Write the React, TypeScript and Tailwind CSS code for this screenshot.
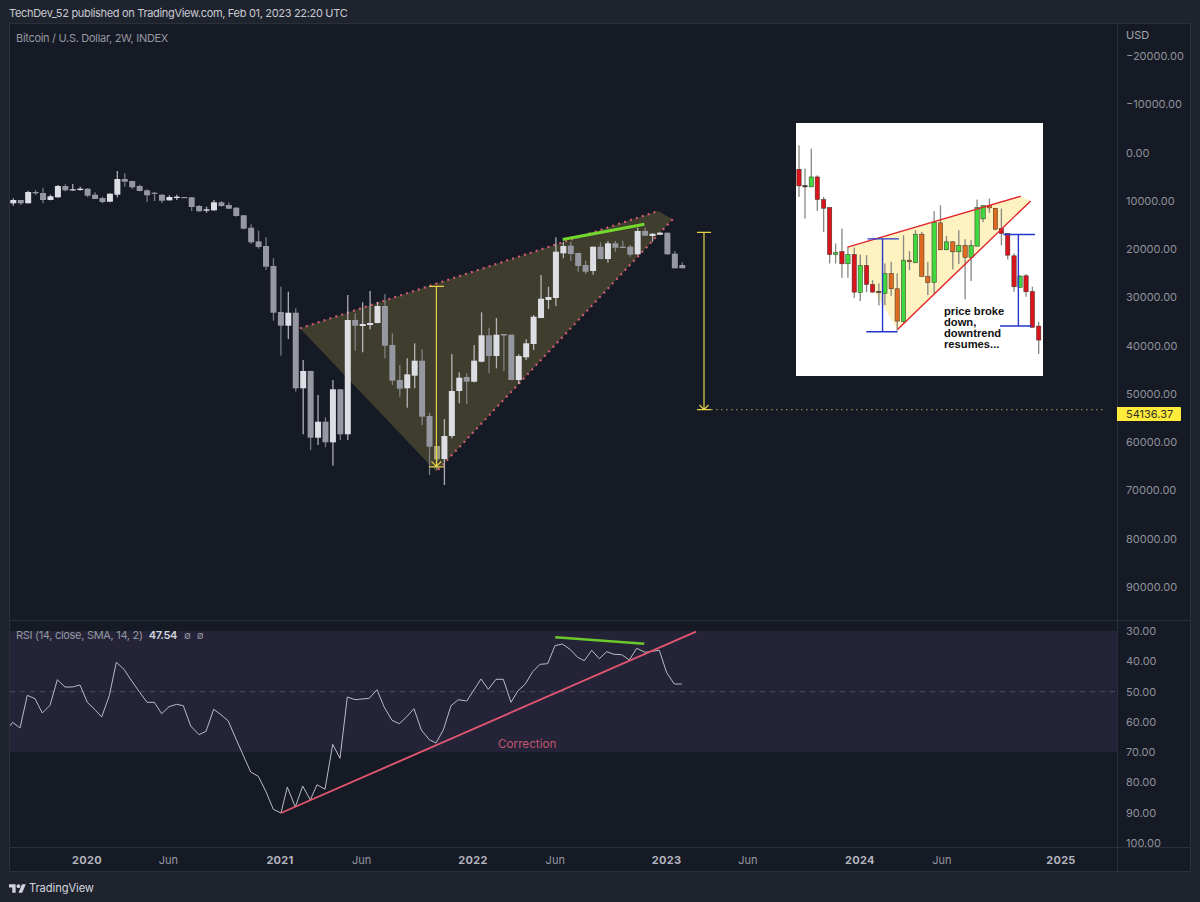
const font = 'font-["Inter","Liberation_Sans",sans-serif]';

// page pixel coords: wickTop, bodyTop, bodyBottom, wickBottom, tone
type Candle = [number, number, number, number, 'l' | 'g' | 'y'];

const candles: Candle[] = [
  [198.3, 200, 203.3, 205.7, 'l'], [200, 200, 203.3, 205, 'g'], [190.7, 192, 203.3, 203.3, 'l'],
  [190, 192, 193.3, 195, 'g'], [187.7, 193, 200, 203.3, 'g'], [194.7, 196.3, 200, 200.3, 'l'],
  [185, 186, 197.3, 197.7, 'l'], [184.3, 186, 190.3, 191.3, 'g'], [184, 189.3, 190.3, 190.7, 'l'],
  [186.7, 188.7, 190, 190.7, 'l'], [188.3, 188.7, 195.7, 197.3, 'g'], [192.3, 194.7, 199, 199, 'g'],
  [196.7, 198, 202, 203.3, 'g'], [193.3, 193.7, 201.7, 202.3, 'l'], [171, 179, 194.7, 197.3, 'l'],
  [173.3, 179, 181.7, 186.7, 'g'], [180.7, 181, 187.3, 189, 'g'], [184.7, 186, 191, 191.3, 'g'],
  [189.3, 190.3, 195.3, 202, 'g'], [192, 192.7, 193.7, 201, 'g'], [194.3, 194.7, 200.7, 203, 'g'],
  [195.3, 197, 200.3, 200.7, 'l'], [194.7, 196.7, 198, 200, 'l'], [197, 197, 198, 198, 'g'],
  [197, 197.3, 207, 211, 'g'], [205, 206, 211.3, 211.7, 'g'], [206.7, 209.3, 210.7, 212.7, 'l'],
  [200, 202.3, 210.3, 211, 'l'], [201, 202.3, 206, 206.7, 'g'], [202.3, 205, 208.7, 209, 'g'],
  [207, 207.7, 216, 216.7, 'g'], [215, 215.3, 228.7, 229.3, 'g'], [224.3, 227.7, 242.3, 244, 'g'],
  [230.7, 241.3, 247, 248.7, 'g'], [237.3, 246, 266.7, 270, 'g'], [258.3, 266, 312.7, 320.7, 'g'],
  [286.7, 312, 325.7, 355.7, 'g'], [291.7, 312.7, 325.7, 339, 'l'], [308.3, 312.7, 388.3, 391.7, 'g'],
  [360, 371, 388.3, 434.3, 'l'], [370.7, 371, 437.7, 450, 'g'], [395, 421.7, 437.7, 445, 'l'],
  [417.3, 421.7, 442.3, 447.3, 'g'], [380, 389.3, 442.3, 465.7, 'l'], [389, 389.3, 434.3, 440, 'g'],
  [295, 320, 434.3, 440, 'l'], [313.3, 320, 325.7, 350.7, 'g'], [302.3, 324, 326, 352.3, 'l'],
  [291, 323, 325, 329.3, 'l'], [302.3, 306, 323, 323.3, 'l'], [294, 306, 345.7, 358.3, 'g'],
  [333.3, 345, 380.7, 385, 'g'], [365, 380, 388.7, 396.7, 'g'], [358.3, 374.3, 388.3, 407.7, 'l'],
  [343.3, 360.7, 375.7, 388.3, 'l'], [349.3, 360.7, 416.7, 425, 'g'], [412.7, 416, 446.7, 475, 'g'],
  [446, 446, 459.3, 470, 'y'], [419, 436, 459, 485, 'l'], [354, 391, 436, 438.3, 'l'],
  [372.3, 377.7, 391, 403.3, 'l'], [373.3, 377, 381.7, 404, 'g'], [345, 360.7, 381.7, 382.3, 'l'],
  [312.3, 335.3, 361.7, 362.3, 'l'], [327.7, 335.3, 356, 373.3, 'g'], [318, 334.7, 356, 368.3, 'l'],
  [334, 334, 335.5, 371, 'g'], [334.7, 334.7, 380, 380, 'g'], [354.3, 356, 380, 384, 'l'],
  [339.3, 343.3, 357.3, 360, 'l'], [315, 316.7, 344, 350, 'l'], [275, 298.7, 318, 318, 'l'],
  [286.7, 297, 300, 309, 'l'], [237.3, 251.7, 298, 306, 'l'], [241.7, 246, 253.3, 258.3, 'l'],
  [241.7, 245.7, 254, 260.7, 'g'], [252.7, 253, 266, 271.7, 'g'], [260.7, 265, 271.7, 274, 'g'],
  [246.7, 246.7, 271, 274.7, 'l'], [242.3, 246.7, 259, 259.3, 'g'], [241, 243.3, 259, 262.7, 'l'],
  [241, 243.3, 247.7, 251.7, 'g'], [240.7, 246.7, 248, 248.3, 'g'], [245, 246.7, 254.7, 256.7, 'g'],
  [227.7, 231, 254.3, 255, 'l'], [227.7, 231, 235.7, 236, 'g'], [233.3, 233.7, 236, 241.7, 'l'],
  [232.3, 232.7, 234.7, 235, 'l'], [232.7, 232.7, 254.3, 254.7, 'g'], [251, 253.7, 268.3, 268.3, 'g'],
  [262.3, 265, 268.3, 268.3, 'g'],
];

const toneColor = { l: '#dcdee4', g: '#9598a1', y: '#9d9b80' };

const rsiPoints =
  '9.3,726.7 12.7,722.3 20,728 27.3,695.3 35,698.7 42.3,713 50,705.3 57.3,679.7 65,687 72.3,687 80,685 87.3,702.3 95,709.7 101.7,717 109.3,695.7 116.3,662.3 124,669.3 131.7,681 139.3,691.7 147,702.3 154.3,702.3 161.7,713.7 169,706.7 176.7,704.3 183.3,705.7 190.7,726 199,734.7 206,731.3 213.7,709.3 221,714.7 228.3,721 236,739 243.7,756.3 250.7,772 258.3,776.3 266,791.7 273.3,809.3 281,813 287.3,787 295.3,807 302.7,786 310.3,800 317,784.7 325,789.3 332.7,744.3 340,758.3 347.3,697 355,699.7 369.3,698.3 377,689.7 384,706.7 392,720.3 399.3,723.7 406.7,716.7 414,708.7 421.3,730 429.3,739.7 436,743 443.3,730 451,705.7 458.3,699.7 466.7,701 481,679 488.3,689.3 496,679.3 503.3,679.3 511,702.3 518,690.7 525.3,684 532.7,671.7 540,664.3 547.7,663.7 555,645.7 562.3,644 570,649.3 577.7,657.3 584.3,660.7 591.7,650.3 599.3,658.7 606.7,651.7 614,654.3 621.7,654.7 629.3,660 636.7,648.3 645,652.3 659.3,650.3 666.7,672.7 674.3,684 681.7,684';

// inset picture, in its own units: x, wickTop, bodyTop, bodyBottom, wickBottom, colour
type InsetCandle = [number, number, number, number, number, string];
const red = '#d8141c';
const orange = '#de6a20';
const green = '#3fd83f';
const dark = '#222222';
const insetCandles: InsetCandle[] = [
  [26, 75, 147, 197, 230, red], [44, 145, 196, 200, 295, dark], [63, 85, 170, 200, 200, green],
  [81, 165, 170, 238, 272, red], [100, 230, 238, 264, 335, red], [118, 262, 262, 403, 430, red],
  [136, 370, 397, 403, 430, green], [155, 325, 394, 431, 473, red], [173, 380, 403, 431, 473, green],
  [192, 382, 403, 516, 533, red], [210, 403, 436, 517, 543, green], [229, 405, 436, 493, 517, red],
  [247, 480, 493, 516, 517, red], [266, 490, 514, 517, 556, dark], [284, 430, 460, 520, 555, green],
  [303, 425, 460, 506, 527, orange], [321, 460, 506, 603, 632, orange], [340, 345, 420, 605, 610, green],
  [358, 393, 420, 425, 450, orange], [376, 330, 342, 428, 428, green], [395, 335, 342, 469, 470, orange],
  [413, 425, 469, 487, 525, orange], [432, 273, 306, 487, 520, green], [451, 255, 308, 389, 390, orange],
  [469, 347, 365, 389, 390, green], [488, 363, 365, 395, 448, orange], [506, 330, 376, 395, 432, green],
  [525, 357, 376, 412, 538, orange], [543, 360, 376, 412, 483, green], [561, 238, 262, 378, 378, green],
  [579, 255, 256, 296, 306, green], [598, 235, 256, 263, 278, orange], [616, 263, 264, 327, 330, orange],
  [634, 265, 325, 340, 376, red], [653, 340, 340, 405, 418, red], [672, 400, 407, 500, 515, red],
  [690, 465, 468, 502, 502, green], [708, 462, 467, 515, 530, red], [727, 500, 514, 622, 622, red],
  [746, 605, 618, 660, 702, red],
];

const priceLabels = [
  '−20000.00', '−10000.00', '0.00', '10000.00', '20000.00', '30000.00',
  '40000.00', '50000.00', '60000.00', '70000.00', '80000.00', '90000.00',
];
const rsiLabels = ['30.00', '40.00', '50.00', '60.00', '70.00', '80.00', '90.00', '100.00'];

const timeLabels: { text: string; center: number; year?: boolean }[] = [
  { text: '2020', center: 87, year: true },
  { text: 'Jun', center: 168.3 },
  { text: '2021', center: 280, year: true },
  { text: 'Jun', center: 361.7 },
  { text: '2022', center: 473, year: true },
  { text: 'Jun', center: 555.3 },
  { text: '2023', center: 666.7, year: true },
  { text: 'Jun', center: 748 },
  { text: '2024', center: 860, year: true },
  { text: 'Jun', center: 942 },
  { text: '2025', center: 1061, year: true },
];

function MainDrawing() {
  return (
    <svg className="absolute inset-0" width="1107" height="596" viewBox="10 24 1107 596">
      <polygon points="300,328.3 658.3,211 672.7,219.3 436.3,471.7" fill="#3f3d2e" />
      <line x1="300" y1="328.3" x2="658.3" y2="211" stroke="#cf5c74" strokeWidth="2.2" strokeDasharray="2 4.2" />
      <line x1="672.7" y1="219.3" x2="436.3" y2="471.7" stroke="#cf5c74" strokeWidth="2.2" strokeDasharray="2 4.2" />
      {candles.map(([wickTop, top, bottom, wickBottom, tone], i) => {
        const x = 13.3 + i * 7.433;
        return (
          <g key={i} fill={toneColor[tone]}>
            <rect x={x - 0.65} y={wickTop} width="1.3" height={wickBottom - wickTop} opacity="0.75" />
            <rect x={x - 3} y={top} width="6" height={Math.max(bottom - top, 1.2)} />
          </g>
        );
      })}
      <g stroke="#e6d24a" strokeWidth="1.2" fill="none">
        <path d="M429 286.3H444M436.4 286.3V466.5M429 466.8H444M431.5 461.5L436.4 466.5L441.3 461.5" />
        <path d="M697 232.3H711M704 232.3V409.7M697 409.7H711M699.5 405L704 409.7L708.5 405" />
      </g>
      <line x1="711" y1="409.7" x2="1106" y2="409.7" stroke="#8a8050" strokeWidth="1.2" strokeDasharray="1.6 3.4" />
      <line x1="562.7" y1="239.5" x2="644.3" y2="224.3" stroke="#72d92c" strokeWidth="2.9" />
    </svg>
  );
}

function InsetPicture() {
  return (
    <div className="absolute left-[786px] top-[99px] h-[253px] w-[247px] bg-white">
      <svg className="absolute inset-0" width="247" height="253" viewBox="18 8 740 760">
        <polygon points="172,381 692,228 722,242 322,628" fill="#fdf2c0" />
        {insetCandles.map(([x, wickTop, top, bottom, wickBottom, color]) => (
          <g key={x}>
            <rect x={x - 2} y={wickTop} width="4" height={wickBottom - wickTop} fill="#8a8a84" />
            <rect x={x - 6.5} y={top} width="13" height={Math.max(bottom - top, 3)} fill={color} stroke="#3a3026" strokeWidth="1.5" />
          </g>
        ))}
        <g stroke="#e0242c" strokeWidth="4.2">
          <line x1="172" y1="381" x2="692" y2="228" />
          <line x1="322" y1="628" x2="722" y2="242" />
        </g>
        <g stroke="#2536cf" strokeWidth="4.2" fill="none">
          <path d="M232 356H326M277 356V635M228 635H322" />
          <path d="M640 343H735M685 343V618M630 618H725" />
        </g>
      </svg>
      <p className='absolute left-[148px] top-[183px] font-["Liberation_Sans",sans-serif] text-[11.2px] font-bold leading-[11.1px] text-[#111111]'>
        price broke
        <br />
        down,
        <br />
        downtrend
        <br />
        resumes...
      </p>
    </div>
  );
}

function RsiDrawing() {
  return (
    <svg className="absolute inset-0" width="1107" height="226" viewBox="10 621 1107 226">
      <line x1="10" y1="691.7" x2="1117" y2="691.7" stroke="#4c4a5e" strokeWidth="1" strokeDasharray="5 5" />
      <polyline points={rsiPoints} fill="none" stroke="#b9bbc5" strokeWidth="1" />
      <line x1="281" y1="813" x2="696" y2="631.7" stroke="#e0566e" strokeWidth="1.9" />
      <line x1="555.3" y1="637.3" x2="644.3" y2="643.7" stroke="#6cc92c" strokeWidth="2.4" />
    </svg>
  );
}

export default function App() {
  return (
    <div className={`flex h-[902px] w-[1200px] flex-col overflow-hidden bg-[#1f232e] ${font}`}>
      <header className="flex h-[23px] shrink-0 items-center pl-[9px] pt-[3px] text-[11px] tracking-[-0.32px] text-[#c8cad2]">
        TechDev_52 published on TradingView.com, Feb 01, 2023 22:20 UTC
      </header>

      <div className="mx-[9px] flex h-[849px] shrink-0 border border-[#2b2f3a] bg-[#161a25]">
        <div className="flex w-[1107px] shrink-0 flex-col">
          <div className="relative h-[597px] shrink-0 overflow-hidden border-b border-[#2b2f3a]">
            <MainDrawing />
            <InsetPicture />
            <div className="absolute left-[6px] top-[7px] text-[11px] leading-[14px] tracking-[-0.3px] text-[#9598a1]">
              Bitcoin / U.S. Dollar, 2W, INDEX
            </div>
          </div>

          <div className="relative h-[227px] shrink-0 overflow-hidden border-b border-[#2b2f3a] pt-[10px]">
            <div className="h-[121px] bg-[#242338]" />
            <RsiDrawing />
            <div className="absolute left-[6px] top-[7px] flex items-center gap-[6px] text-[11px] leading-[14px] tracking-[-0.3px] text-[#9598a1]">
              <span>RSI (14, close, SMA, 14, 2)</span>
              <span className="font-semibold text-[#d1d4dc]">47.54</span>
              <span className="ml-[1px] text-[10px]">∅</span>
              <span className="text-[10px]">∅</span>
            </div>
            <div className="absolute left-[488px] top-[115px] text-[11.7px] leading-[16px] text-[#c0566f]">
              Correction
            </div>
          </div>

          <div className="flex h-[23px] items-center pt-[2px] text-[11px] text-[#9598a1]">
            {timeLabels.map((label, i) => {
              const prev = i === 0 ? 10 : timeLabels[i - 1].center + 20;
              return (
                <span
                  key={i}
                  className={label.year ? 'w-[40px] text-center font-bold tracking-[0.3px] text-[#b2b5be]' : 'w-[40px] text-center'}
                  style={{ marginLeft: label.center - prev - 20 }}
                >
                  {label.text}
                </span>
              );
            })}
          </div>
        </div>

        <div className="flex min-w-0 flex-1 flex-col border-l border-[#2b2f3a] text-[11px] leading-[14px] text-[#8f929b]">
          <div className="relative h-[597px] shrink-0 border-b border-[#2b2f3a] pl-[8px] pt-[4px]">
            <div className="h-[15px] text-[#a3a6af]">USD</div>
            <div className="mt-[6px]">
              {priceLabels.map((label) => (
                <div key={label} className="h-[48.27px]">
                  {label}
                </div>
              ))}
            </div>
            <div className="absolute left-[-1px] top-[383px] flex h-[14px] w-[64px] items-center rounded-r-[1px] bg-[#ffeb3b] pl-[9px] text-[#2f2f25]">
              54136.37
            </div>
          </div>
          <div className="h-[227px] shrink-0 overflow-hidden border-b border-[#2b2f3a] pl-[8px] pt-[3px]">
            {rsiLabels.map((label) => (
              <div key={label} className="h-[30.29px]">
                {label}
              </div>
            ))}
          </div>
        </div>
      </div>

      <footer className="flex flex-1 items-center gap-[3px] pl-[9px] pt-[2px]">
        <svg width="17" height="9" viewBox="0 7 36 18" fill="#d1d4dc">
          <path d="M14 25H7V14H0V7h14v18z" />
          <circle cx="20" cy="11" r="4" />
          <path d="M28 25h-8l7.5-18h8L28 25z" />
        </svg>
        <span className="text-[11.2px] tracking-[-0.1px] text-[#d1d4dc]">TradingView</span>
      </footer>
    </div>
  );
}
